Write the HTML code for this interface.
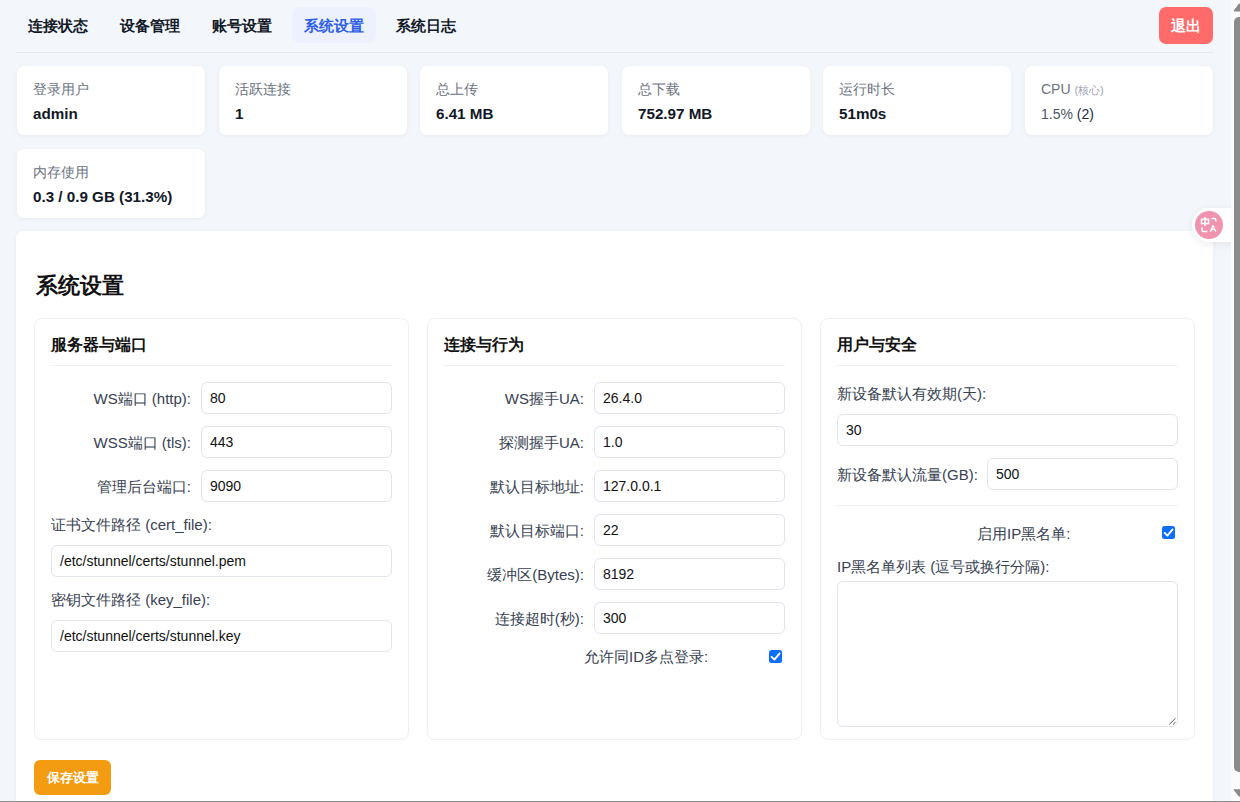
<!DOCTYPE html>
<html><head><meta charset="utf-8">
<style>
*{box-sizing:border-box;margin:0;padding:0}
html,body{width:1240px;height:802px;overflow:hidden}
body{background:#f3f6fb;font-family:"Liberation Sans",sans-serif;color:#111827;position:relative}
.abs{position:absolute}
.tab{position:absolute;top:7px;height:36px;width:84px;border-radius:8px;font-size:15px;font-weight:bold;line-height:38px;text-align:center;color:#111827}
.tab.active{background:#edf1fd;color:#2f5fe6}
.navline{position:absolute;left:16px;top:52px;width:1197px;height:1px;background:#e2e6ed}
.logout{position:absolute;left:1159px;top:7px;width:54px;height:37px;border-radius:7px;background:#ff6b6b;color:#fff;font-size:15px;font-weight:bold;line-height:38px;text-align:center}
.stat{position:absolute;width:188px;height:69px;background:#fff;border-radius:7px;box-shadow:0 1px 4px rgba(20,30,60,.05)}
.stat .l{position:absolute;left:16px;top:13px;font-size:14px;line-height:20px;color:#6b7280}
.stat .v{position:absolute;left:16px;top:38px;font-size:15.2px;line-height:20px;font-weight:bold;color:#111827}
.main{position:absolute;left:16px;top:231px;width:1197px;height:600px;background:#fff;border-radius:7px;box-shadow:0 1px 4px rgba(20,30,60,.06)}
.h2{position:absolute;left:36px;top:272px;font-size:22px;line-height:28px;font-weight:bold;color:#111}
.sub{position:absolute;top:318px;width:375px;height:422px;border:1px solid #edeff4;border-radius:8px;background:#fff}
.sub .t{position:absolute;left:16px;top:16px;font-size:16px;line-height:20px;font-weight:bold;color:#111}
.sub .sep{position:absolute;left:16px;right:16px;top:46px;height:1px;background:#eef0f4}
.lab{position:absolute;font-size:15px;line-height:21px;color:#374151;white-space:nowrap}
.lab.r{text-align:right;width:140px}
.inp{position:absolute;height:32px;border:1px solid #e0e4ec;border-radius:6px;background:#fff;font-size:14px;line-height:30px;padding-left:8px;color:#111;font-family:"Liberation Sans",sans-serif}
.cb{position:absolute;width:13px;height:13px;border-radius:2.5px;background:#0d6efd}
.cb svg{position:absolute;left:0;top:0}
.save{position:absolute;left:34px;top:760px;width:77px;height:35px;border-radius:6px;background:#f39c12;color:#fff;font-size:13px;font-weight:bold;line-height:35px;text-align:center}
</style></head><body>
<div class="tab" style="left:16px">连接状态</div>
<div class="tab" style="left:108px">设备管理</div>
<div class="tab" style="left:200px">账号设置</div>
<div class="tab active" style="left:292px">系统设置</div>
<div class="tab" style="left:384px">系统日志</div>
<div class="logout">退出</div>
<div class="navline"></div>

<div class="stat" style="left:17px;top:66px"><div class="l">登录用户</div><div class="v">admin</div></div>
<div class="stat" style="left:219px;top:66px"><div class="l">活跃连接</div><div class="v">1</div></div>
<div class="stat" style="left:420px;top:66px"><div class="l">总上传</div><div class="v">6.41 MB</div></div>
<div class="stat" style="left:622px;top:66px"><div class="l">总下载</div><div class="v">752.97 MB</div></div>
<div class="stat" style="left:823px;top:66px"><div class="l">运行时长</div><div class="v">51m0s</div></div>
<div class="stat" style="left:1025px;top:66px"><div class="l">CPU <span style="font-size:11px;color:#9aa3b2">(核心)</span></div><div class="v" style="font-weight:normal;font-size:14px;color:#4b5563">1.5% <span style="color:#1f2a44">(2)</span></div></div>
<div class="stat" style="left:17px;top:149px"><div class="l">内存使用</div><div class="v">0.3 / 0.9 GB (31.3%)</div></div>

<div class="main"></div>
<div class="h2">系统设置</div>

<div class="sub" style="left:34px"><div class="t">服务器与端口</div><div class="sep"></div></div>
<div class="sub" style="left:427px"><div class="t">连接与行为</div><div class="sep"></div></div>
<div class="sub" style="left:820px"><div class="t">用户与安全</div><div class="sep"></div></div>

<!-- col1 -->
<div class="lab r" style="left:51px;top:388px">WS端口 (http):</div><div class="inp" style="left:201px;top:382px;width:191px">80</div>
<div class="lab r" style="left:51px;top:432px">WSS端口 (tls):</div><div class="inp" style="left:201px;top:426px;width:191px">443</div>
<div class="lab r" style="left:51px;top:476px">管理后台端口:</div><div class="inp" style="left:201px;top:470px;width:191px">9090</div>
<div class="lab" style="left:51px;top:514px">证书文件路径 (cert_file):</div>
<div class="inp" style="left:51px;top:545px;width:341px">/etc/stunnel/certs/stunnel.pem</div>
<div class="lab" style="left:51px;top:589px">密钥文件路径 (key_file):</div>
<div class="inp" style="left:51px;top:620px;width:341px">/etc/stunnel/certs/stunnel.key</div>

<!-- col2 -->
<div class="lab r" style="left:444px;top:388px">WS握手UA:</div><div class="inp" style="left:594px;top:382px;width:191px">26.4.0</div>
<div class="lab r" style="left:444px;top:432px">探测握手UA:</div><div class="inp" style="left:594px;top:426px;width:191px">1.0</div>
<div class="lab r" style="left:444px;top:476px">默认目标地址:</div><div class="inp" style="left:594px;top:470px;width:191px">127.0.0.1</div>
<div class="lab r" style="left:444px;top:520px">默认目标端口:</div><div class="inp" style="left:594px;top:514px;width:191px">22</div>
<div class="lab r" style="left:444px;top:564px">缓冲区(Bytes):</div><div class="inp" style="left:594px;top:558px;width:191px">8192</div>
<div class="lab r" style="left:444px;top:608px">连接超时(秒):</div><div class="inp" style="left:594px;top:602px;width:191px">300</div>
<div class="lab" style="left:584px;top:646px">允许同ID多点登录:</div>
<div class="cb" style="left:769px;top:650px"><svg width="13" height="13" viewBox="0 0 13 13"><path d="M2.6 6.9 L5.4 9.6 L10.6 3.4" fill="none" stroke="#fff" stroke-width="1.9" stroke-linecap="round" stroke-linejoin="round"/></svg></div>

<!-- col3 -->
<div class="lab" style="left:837px;top:383px">新设备默认有效期(天):</div>
<div class="inp" style="left:837px;top:414px;width:341px">30</div>
<div class="lab r" style="left:837px;top:464px">新设备默认流量(GB):</div><div class="inp" style="left:987px;top:458px;width:191px">500</div>
<div class="abs" style="left:837px;top:505px;width:341px;height:1px;background:#eef0f4"></div>
<div class="lab" style="left:977px;top:523px">启用IP黑名单:</div>
<div class="cb" style="left:1162px;top:526px"><svg width="13" height="13" viewBox="0 0 13 13"><path d="M2.6 6.9 L5.4 9.6 L10.6 3.4" fill="none" stroke="#fff" stroke-width="1.9" stroke-linecap="round" stroke-linejoin="round"/></svg></div>
<div class="lab" style="left:837px;top:556px">IP黑名单列表 (逗号或换行分隔):</div>
<div class="inp" style="left:837px;top:581px;width:341px;height:146px"></div>

<div class="save">保存设置</div>

<!-- textarea resize grip -->
<svg class="abs" style="left:1166px;top:715px" width="12" height="12" viewBox="0 0 12 12"><path d="M3.2 9.5 L9.5 3.3 M7 9.6 L9.6 7.2" stroke="#5a5a5a" stroke-width="1" fill="none"/></svg>
<!-- translate widget -->
<div class="abs" style="left:1192px;top:208px;width:48px;height:34px;border-radius:17px 0 0 17px;background:#fff;box-shadow:0 2px 8px rgba(0,0,0,.08)"></div>
<div class="abs" style="left:1195px;top:211px;width:28px;height:28px;border-radius:50%;background:#f093ae"></div>
<svg class="abs" style="left:1195px;top:211px" width="28" height="28" viewBox="0 0 28 28">
<g fill="none" stroke="#fff" stroke-width="1.5">
<rect x="6.5" y="8.3" width="7" height="4.3"/>
<path d="M10 6 V15"/>
<path d="M16.5 7.6 H19.6 Q20.7 7.6 20.7 8.8 V10.6"/>
<path d="M7 16.2 V19.3 Q7 20.5 8.2 20.5 H12.3"/>
</g>
<path d="M14.6 20.8 L17.6 13.9 H18.5 L21.5 20.8 H20 L19.2 18.9 H16.9 L16.1 20.8 Z M17.35 17.7 H18.75 L18.05 15.9 Z" fill="#fff"/>
</svg>
<!-- scrollbar -->
<div class="abs" style="left:1231px;top:0;width:9px;height:801px;background:#fbfbfb"></div>
<div class="abs" style="left:1234px;top:17px;width:12px;height:755px;border-radius:5px;background:#8a8a8a"></div>
<svg class="abs" style="left:1231px;top:0" width="9" height="802" viewBox="0 0 9 802">
<path d="M3 11 L8.3 3.8 L13.6 11 Z" fill="#8a8a8a" stroke="#8a8a8a" stroke-width="1" stroke-linejoin="round"/>
<path d="M3 789.8 L8.3 796.4 L13.6 789.8 Z" fill="#8a8a8a" stroke="#8a8a8a" stroke-width="1" stroke-linejoin="round"/>
</svg>
<div class="abs" style="left:0;top:801px;width:1240px;height:1px;background:#8c8c8c"></div>
</body></html>
